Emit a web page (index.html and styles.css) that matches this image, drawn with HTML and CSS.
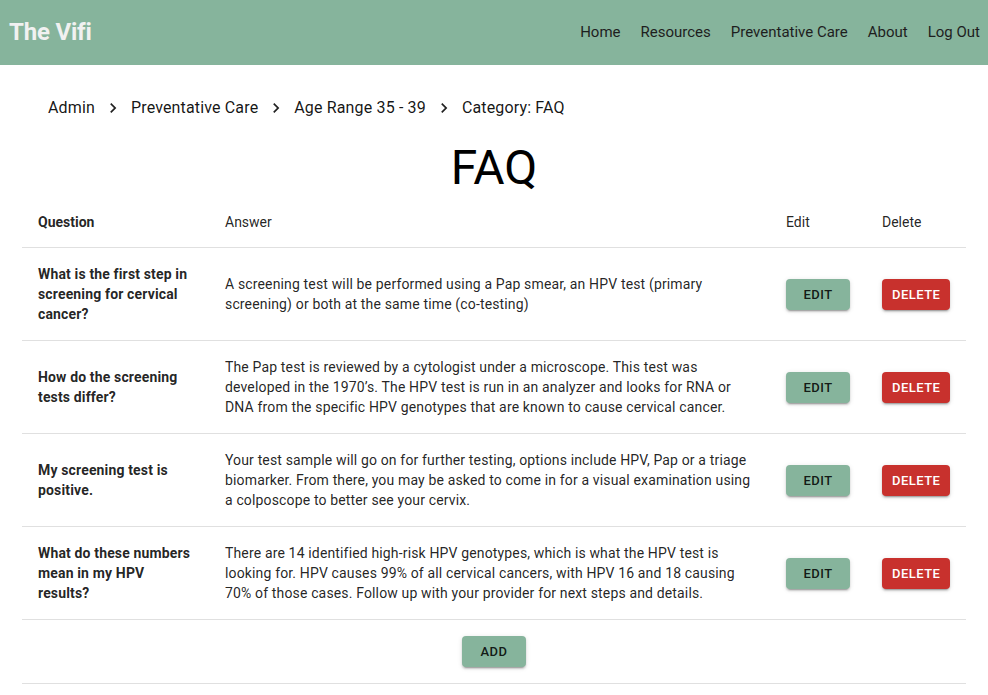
FILE: index.html
```html
<!DOCTYPE html>
<html lang="en">
<head>
<meta charset="utf-8">
<title>The Vifi - FAQ</title>
<link rel="stylesheet" href="styles.css">
</head>
<body>
<header class="topbar">
  <div class="brand">The Vifi</div>
  <nav class="nav">
    <a href="#">Home</a>
    <a href="#">Resources</a>
    <a href="#">Preventative Care</a>
    <a href="#">About</a>
    <a href="#">Log Out</a>
  </nav>
</header>
<main class="page">
  <ol class="crumbs">
    <li>Admin</li>
    <li class="sep"><svg viewBox="0 0 24 24" width="20" height="20"><path d="M10 6 8.59 7.41 13.17 12l-4.58 4.59L10 18l6-6z"/></svg></li>
    <li>Preventative Care</li>
    <li class="sep"><svg viewBox="0 0 24 24" width="20" height="20"><path d="M10 6 8.59 7.41 13.17 12l-4.58 4.59L10 18l6-6z"/></svg></li>
    <li>Age Range 35 - 39</li>
    <li class="sep"><svg viewBox="0 0 24 24" width="20" height="20"><path d="M10 6 8.59 7.41 13.17 12l-4.58 4.59L10 18l6-6z"/></svg></li>
    <li>Category: FAQ</li>
  </ol>
  <h1 class="title">FAQ</h1>
  <table class="faq">
    <colgroup>
      <col class="c-q"><col class="c-a"><col class="c-e"><col class="c-d">
    </colgroup>
    <thead>
      <tr>
        <th class="q">Question</th>
        <th>Answer</th>
        <th>Edit</th>
        <th>Delete</th>
      </tr>
    </thead>
    <tbody>
      <tr>
        <td class="q">What is the first step in screening for cervical cancer?</td>
        <td>A screening test will be performed using a Pap smear, an HPV test (primary screening) or both at the same time (co-testing)</td>
        <td><button class="btn btn-green">Edit</button></td>
        <td><button class="btn btn-red">Delete</button></td>
      </tr>
      <tr>
        <td class="q">How do the screening tests differ?</td>
        <td>The Pap test is reviewed by a cytologist under a microscope. This test was developed in the 1970’s. The HPV test is run in an analyzer and looks for RNA or DNA from the specific HPV genotypes that are known to cause cervical cancer.</td>
        <td><button class="btn btn-green">Edit</button></td>
        <td><button class="btn btn-red">Delete</button></td>
      </tr>
      <tr>
        <td class="q">My screening test is positive.</td>
        <td>Your test sample will go on for further testing, options include HPV, Pap or a triage biomarker. From there, you may be asked to come in for a visual examination using a colposcope to better see your cervix.</td>
        <td><button class="btn btn-green">Edit</button></td>
        <td><button class="btn btn-red">Delete</button></td>
      </tr>
      <tr>
        <td class="q">What do these numbers mean in my HPV results?</td>
        <td>There are 14 identified high-risk HPV genotypes, which is what the HPV test is looking for. HPV causes 99% of all cervical cancers, with HPV 16 and 18 causing 70% of those cases. Follow up with your provider for next steps and details.</td>
        <td><button class="btn btn-green">Edit</button></td>
        <td><button class="btn btn-red">Delete</button></td>
      </tr>
      <tr>
        <td class="addcell" colspan="4"><button class="btn btn-green">Add</button></td>
      </tr>
    </tbody>
  </table>
</main>
</body>
</html>
```

FILE: styles.css
```css
* { box-sizing: border-box; }
html, body { margin: 0; padding: 0; }
body {
  font-family: Roboto, "Liberation Sans", sans-serif;
  color: rgba(0,0,0,0.87);
  background: #fff;
}
.topbar {
  height: 65px;
  background: #86b49c;
  display: flex;
  align-items: center;
  justify-content: space-between;
  padding: 0 8px 1px 9px;
}
.brand {
  font-size: 24px;
  font-weight: 700;
  color: #f1f1f1;
  letter-spacing: -0.2px;
}
.nav {
  display: flex;
  gap: 20px;
}
.nav a {
  color: #1e1e1e;
  text-decoration: none;
  font-size: 15px;
  line-height: 24px;
}
.page {
  padding: 0 22px;
}
.crumbs {
  list-style: none;
  margin: 0;
  padding: 31px 0 0 26px;
  display: flex;
  align-items: center;
  font-size: 16px;
  line-height: 24px;
  letter-spacing: 0.15px;
  color: rgba(0,0,0,0.92);
}
.crumbs .sep {
  display: flex;
  margin: 0 8px;
}
.crumbs .sep svg { fill: rgba(0,0,0,0.87); }
.title {
  margin: 20px 0 0;
  text-align: center;
  font-size: 48px;
  font-weight: 400;
  line-height: 56px;
  color: #000;
}
.faq {
  width: 100%;
  border-collapse: collapse;
  table-layout: fixed;
  font-size: 14px;
}
.c-q { width: 187px; }
.c-e { width: 96px; }
.c-d { width: 100px; }
.faq th, .faq td {
  text-align: left;
  padding: 16px;
  border-bottom: 1px solid #e0e0e0;
  vertical-align: middle;
}
.faq th {
  font-weight: 400;
  line-height: 24px;
  padding-top: 14px;
  padding-bottom: 13px;
}
.faq td {
  line-height: 20px;
  letter-spacing: 0.15px;
}
.faq .q { font-weight: 700; }
.faq td.addcell {
  text-align: center;
  padding: 16px;
}
.btn {
  font-family: Roboto, "Liberation Sans", sans-serif;
  font-size: 13px;
  font-weight: 500;
  line-height: 23px;
  letter-spacing: 0.46px;
  text-transform: uppercase;
  min-width: 64px;
  padding: 4px 10px;
  border: 0;
  border-radius: 4px;
  box-shadow: 0 3px 1px -2px rgba(0,0,0,0.2), 0 2px 2px 0 rgba(0,0,0,0.14), 0 1px 5px 0 rgba(0,0,0,0.12);
  cursor: pointer;
  vertical-align: middle;
}
.btn-green {
  background: #86b49c;
  color: rgba(0,0,0,0.87);
}
.btn-red {
  background: #c8312d;
  color: #fff;
}
```
